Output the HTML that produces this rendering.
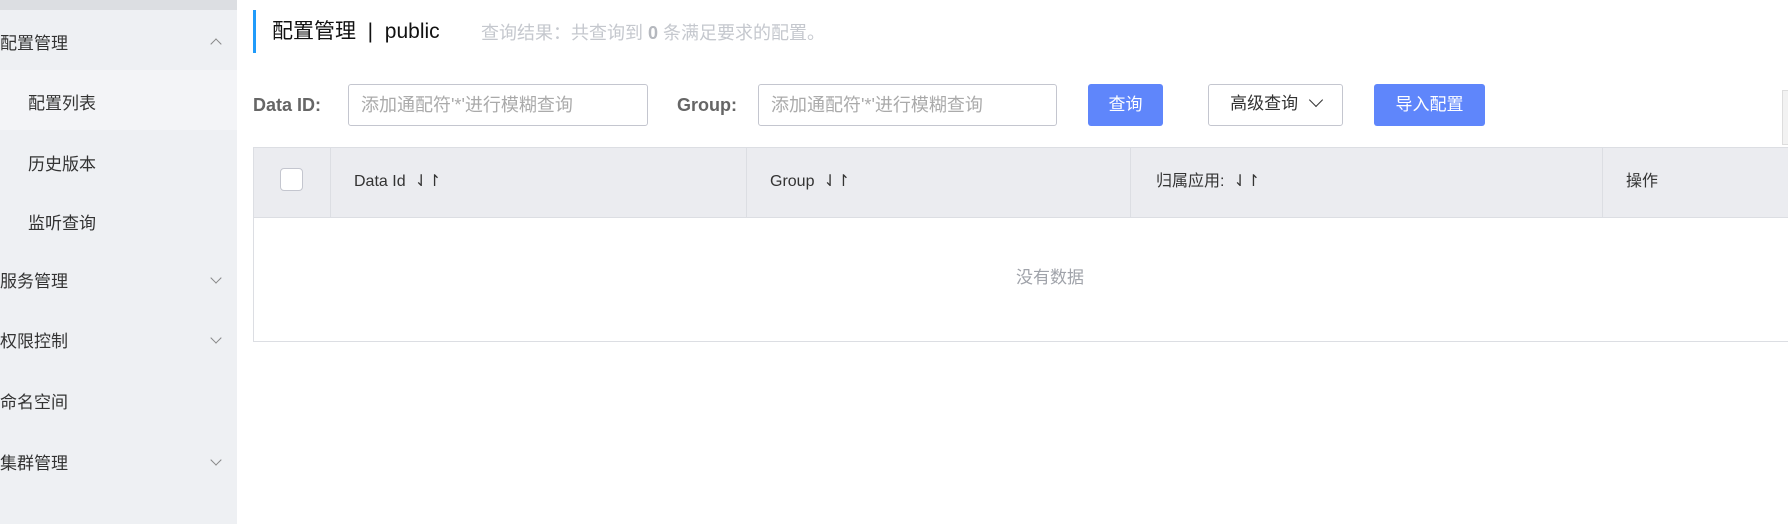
<!DOCTYPE html><html><head><meta charset="utf-8"><style>
*{margin:0;padding:0;box-sizing:border-box}
body{width:1788px;height:524px;overflow:hidden;background:#fff;font-family:"Liberation Sans","Noto Sans CJK SC",sans-serif;position:relative}
.a{position:absolute;white-space:nowrap}
.side{left:0;top:0;width:237px;height:524px;background:#eef0f3}
.mi{left:0;font-size:17px;color:#333;line-height:20px;height:20px}
.chev{position:absolute;left:212px;width:8px;height:8px;border-right:1.3px solid #888;border-bottom:1.3px solid #888}
.inp{top:84px;height:42px;border:1px solid #c4c6cf;border-radius:3px;font-size:18px;color:#aaa;padding:10px 12px;line-height:20px}
.btn{top:84px;height:42px;border-radius:3px;font-size:17px;line-height:42px;text-align:center}
.th{top:172px;font-size:16px;color:#333;line-height:20px;height:20px}
.vl{top:147px;width:1px;height:71px;background:#dcdee3}
</style></head><body>
<div class="a side"></div>
<div class="a" style="left:0;top:0;width:237px;height:10px;background:#dcdee2"></div>
<div class="a" style="left:0;top:70px;width:237px;height:60px;background:#f3f4f7"></div>
<div class="a mi" style="top:34px">配置管理</div>
<div class="chev" style="top:40px;transform:rotate(-135deg)"></div>
<div class="a mi" style="left:28px;top:94px">配置列表</div>
<div class="a mi" style="left:28px;top:155px">历史版本</div>
<div class="a mi" style="left:28px;top:214px">监听查询</div>
<div class="a mi" style="top:272px">服务管理</div><div class="chev" style="top:274px;transform:rotate(45deg)"></div>
<div class="a mi" style="top:332px">权限控制</div><div class="chev" style="top:334px;transform:rotate(45deg)"></div>
<div class="a mi" style="top:393px">命名空间</div>
<div class="a mi" style="top:454px">集群管理</div><div class="chev" style="top:456px;transform:rotate(45deg)"></div>

<div class="a" style="left:253px;top:10px;width:3px;height:43px;background:#209bfa"></div>
<div class="a" style="left:272px;top:20px;font-size:21px;color:#111;line-height:24px">配置管理 &nbsp;| &nbsp;public</div>
<div class="a" style="left:481px;top:22px;font-size:18px;color:#c5c8ce;line-height:22px">查询结果：共查询到 <b style="color:#b5b8be">0</b> 条满足要求的配置。</div>

<div class="a" style="left:253px;top:95px;font-size:18px;font-weight:bold;color:#666">Data ID:</div>
<div class="a inp" style="left:348px;width:300px">添加通配符'*'进行模糊查询</div>
<div class="a" style="left:677px;top:95px;font-size:18px;font-weight:bold;color:#666">Group:</div>
<div class="a inp" style="left:758px;width:299px">添加通配符'*'进行模糊查询</div>
<div class="a btn" style="left:1088px;width:75px;background:#5f86fb;color:#fff">查询</div>
<div class="a btn" style="left:1208px;width:135px;border:1px solid #c4c6cf;color:#333;line-height:38px">高级查询 <span style="display:inline-block;width:10px;height:10px;border-right:1.4px solid #333;border-bottom:1.4px solid #333;transform:rotate(45deg);margin:0 0 4px 8px"></span></div>
<div class="a btn" style="left:1374px;width:111px;background:#5f86fb;color:#fff">导入配置</div>
<div class="a" style="left:1782px;top:90px;width:10px;height:55px;border:1px solid #ddd;background:#f2f2f2"></div>

<div class="a" style="left:253px;top:147px;width:1540px;height:195px;border:1px solid #dcdee3"></div>
<div class="a" style="left:254px;top:148px;width:1540px;height:70px;background:#ebecf0;border-bottom:1px solid #dcdee3"></div>
<div class="a vl" style="left:330px"></div><div class="a vl" style="left:746px"></div><div class="a vl" style="left:1130px"></div><div class="a vl" style="left:1602px"></div>
<div class="a" style="left:280px;top:168px;width:23px;height:23px;border:1px solid #c4c6cf;border-radius:4px;background:#fff"></div>
<div class="a th" style="left:354px">Data Id &nbsp;⇃↾</div>
<div class="a th" style="left:770px">Group &nbsp;⇃↾</div>
<div class="a th" style="left:1156px">归属应用: &nbsp;⇃↾</div>
<div class="a th" style="left:1626px">操作</div>
<div class="a" style="left:1016px;top:268px;font-size:17px;color:#a0a3aa;line-height:20px">没有数据</div>
</body></html>
